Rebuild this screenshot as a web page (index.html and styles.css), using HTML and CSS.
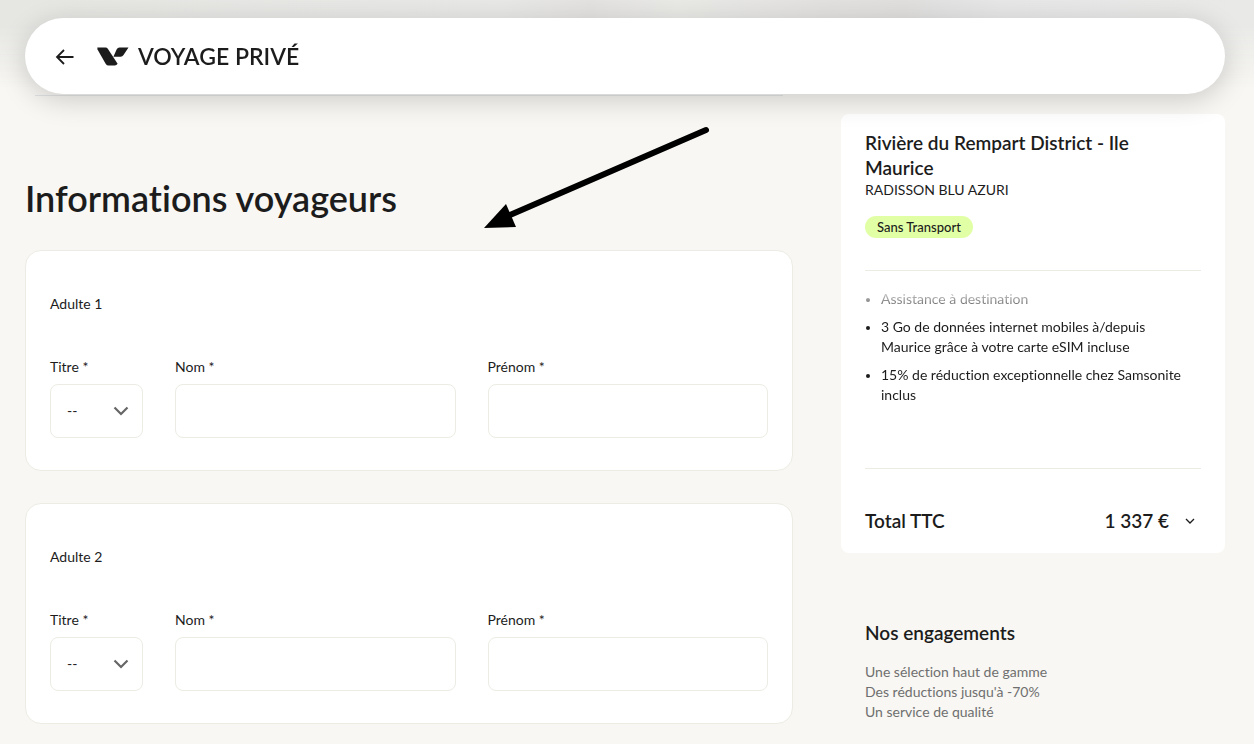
FILE: index.html
```html
<!DOCTYPE html>
<html lang="fr">
<head>
    <meta charset="UTF-8">
    <meta name="viewport" content="width=device-width, initial-scale=1.0">
    <title>Informations voyageurs - Voyage Privé</title>
    <link rel="stylesheet" href="styles.css">
</head>
<body>
    <div class="backdrop"></div>

    <header class="header">
        <a class="back" href="#" aria-label="Retour">
            <svg width="20" height="18" viewBox="0 0 20 18" fill="none" stroke="#1c1c1c" stroke-width="1.8">
                <path d="M18.500 10H2M9 3L2 10L9 17"/>
            </svg>
        </a>
        <a class="logo" href="#">
            <svg width="32" height="20" viewBox="0 0 32 20" fill="#1c1c1c">
                <path d="M0.300 1.500H8.500Q10 1.500 10.800 2.700L20.600 17.700Q19.500 19.500 17.800 19.500H11.500Q9.800 19.500 8.800 18L0.500 3.500Z"/>
                <path d="M22.500 1.500H31.500L26.500 9.100Q25.500 10.700 23.600 10.700H16.400L19.600 3.500Q20.600 1.500 22.500 1.500Z"/>
            </svg>
            <span>VOYAGE PRIVÉ</span>
        </a>
    </header>

    <main class="page">
        <div class="form-column">
            <div class="section-end"></div>
            <h1>Informations voyageurs</h1>

            <form>
                <!-- Traveller 1 -->
                <section class="card">
                    <h2>Adulte 1</h2>
                    <div class="fields">
                        <div class="field">
                            <label for="title-1">Titre *</label>
                            <div class="select-box">
                                <select id="title-1">
                                    <option>--</option>
                                </select>
                                <svg width="16" height="10" viewBox="0 0 16 10" fill="none" stroke="#666" stroke-width="2.200">
                                    <path d="M1.500 1.500L8 8L14.500 1.500"/>
                                </svg>
                            </div>
                        </div>
                        <div class="field">
                            <label for="lastname-1">Nom *</label>
                            <input type="text" id="lastname-1">
                        </div>
                        <div class="field">
                            <label for="firstname-1">Prénom *</label>
                            <input type="text" id="firstname-1">
                        </div>
                    </div>
                </section>

                <!-- Traveller 2 -->
                <section class="card">
                    <h2>Adulte 2</h2>
                    <div class="fields">
                        <div class="field">
                            <label for="title-2">Titre *</label>
                            <div class="select-box">
                                <select id="title-2">
                                    <option>--</option>
                                </select>
                                <svg width="16" height="10" viewBox="0 0 16 10" fill="none" stroke="#666" stroke-width="2.200">
                                    <path d="M1.500 1.500L8 8L14.500 1.500"/>
                                </svg>
                            </div>
                        </div>
                        <div class="field">
                            <label for="lastname-2">Nom *</label>
                            <input type="text" id="lastname-2">
                        </div>
                        <div class="field">
                            <label for="firstname-2">Prénom *</label>
                            <input type="text" id="firstname-2">
                        </div>
                    </div>
                </section>
            </form>
        </div>

        <aside class="sidebar">
            <section class="summary">
                <h3>Rivière du Rempart District - Ile Maurice</h3>
                <p class="hotel">RADISSON BLU AZURI</p>
                <span class="badge">Sans Transport</span>
                <div class="included">
                    <ul>
                        <li>Assistance à destination</li>
                        <li>3 Go de données internet mobiles à/depuis Maurice grâce à votre carte eSIM incluse</li>
                        <li>15% de réduction exceptionnelle chez Samsonite inclus</li>
                    </ul>
                </div>
                <div class="total">
                    <span>Total TTC</span>
                    <button type="button" class="price">
                        1&#8239;337&nbsp;€
                        <svg width="10" height="6" viewBox="0 0 10 6" fill="none" stroke="#1c1c1c" stroke-width="1.300">
                            <path d="M1 1L5 5L9 1"/>
                        </svg>
                    </button>
                </div>
            </section>

            <section class="commitments">
                <h4>Nos engagements</h4>
                <p>Une sélection haut de gamme</p>
                <p>Des réductions jusqu'à -70%</p>
                <p>Un service de qualité</p>
            </section>
        </aside>
    </main>

    <svg class="pointer" width="228" height="104" viewBox="0 0 228 104">
        <path d="M222 4L26 89" stroke="#000" stroke-width="6" stroke-linecap="round"/>
        <path d="M0 102L22 78L32 101Z" fill="#000"/>
    </svg>
</body>
</html>
```
FILE: styles.css
```css
* {
    box-sizing: border-box;
}
body {
    font-family: Lato, "Open Sans", sans-serif;
    font-size: 14px;
    font-variant-ligatures: none;
    line-height: 20px;
    color: #1c1c1c;
    background-color: #f8f7f3;
    margin: 0;
    padding: 18px 29px 0 25px;
    min-height: 100vh;
    overflow: hidden;
}
h1, h2, h3, h4, p, ul {
    margin: 0;
}

/* Blurred band behind the floating header */
.backdrop {
    position: fixed;
    top: 0;
    left: 0;
    right: 0;
    height: 88px;
    background: linear-gradient(to right, #e6e6e3, #e8e8e6 40%, #e3e2e1 47%, #e9e9e6 54%, #e2e1e0 66%, #e0dfde 72%, #e7e7e8 80%, #e9e9e7);
    -webkit-mask-image: linear-gradient(#000 30%, transparent);
    mask-image: linear-gradient(#000 30%, transparent);
}
.header {
    position: relative;
    z-index: 10;
    display: flex;
    align-items: center;
    gap: 22px;
    height: 76px;
    padding: 0 30px;
    background-color: #fff;
    border-radius: 38px;
    box-shadow: 0 6px 28px rgba(0, 0, 0, 0.18);
}
.back {
    display: flex;
}
.logo {
    display: flex;
    align-items: center;
    gap: 9px;
    font-size: 23px;
    font-weight: 600;
    color: #1c1c1c;
    text-decoration: none;
}
.page {
    display: grid;
    grid-template-columns: 2fr 1fr;
    gap: 48px;
}
.section-end {
    height: 2px;
    margin: 0 10px;
    border-bottom: 1px solid #e2e3e4;
}
h1 {
    margin: 77px 0 27px;
    font-size: 36px;
    font-weight: 600;
    line-height: 50px;
}
.card {
    margin-bottom: 32px;
    padding: 43px 24px 32px;
    background-color: #fff;
    border: 1px solid #ecece4;
    border-radius: 16px;
}
.card h2 {
    margin-bottom: 43px;
    font-size: 14px;
    font-weight: 400;
}
.fields {
    display: grid;
    grid-template-columns: 93px 1fr 1fr;
    gap: 32px;
}
.field label {
    display: block;
    margin-bottom: 7px;
}
.field input,
.field select {
    display: block;
    width: 100%;
    height: 54px;
    padding: 0 16px;
    font: inherit;
    color: #1c1c1c;
    background-color: #fff;
    border: 1px solid #ecece4;
    border-radius: 8px;
}
.field select {
    appearance: none;
}
.select-box {
    position: relative;
}
.select-box svg {
    position: absolute;
    top: 22px;
    right: 14px;
    pointer-events: none;
}

/* Booking summary */
.sidebar {
    padding-top: 20px;
}
.summary {
    padding: 16px 24px 19px;
    background-color: #fff;
    border-radius: 8px;
}
.summary h3 {
    font-size: 19px;
    font-weight: 600;
    line-height: 25px;
}
.badge {
    display: inline-block;
    margin-top: 16px;
    padding: 0 12px;
    font-size: 13px;
    font-weight: 500;
    line-height: 22px;
    background-color: #e1ffa5;
    border-radius: 11px;
}
.included {
    height: 199px;
    margin-top: 32px;
    border-top: 1px solid #ecece4;
    border-bottom: 1px solid #ecece4;
}
.included ul {
    padding: 18px 12px 0 16px;
    -webkit-mask-image: linear-gradient(transparent 16px, #000 44px);
    mask-image: linear-gradient(transparent 16px, #000 44px);
}
.included li {
    margin-bottom: 8px;
}
.included li::marker {
    font-size: 12px;
}
.total {
    display: flex;
    justify-content: space-between;
    align-items: center;
    margin-top: 39px;
    font-size: 19px;
    font-weight: 600;
    line-height: 26px;
}
.price {
    display: flex;
    align-items: center;
    gap: 16px;
    padding: 0 6px 0 0;
    font: inherit;
    color: inherit;
    background: none;
    border: none;
    cursor: pointer;
}
.commitments {
    margin-top: 67px;
    padding: 0 24px;
    color: #6f6f6f;
}
.commitments h4 {
    margin-bottom: 16px;
    font-size: 19px;
    font-weight: 600;
    line-height: 26px;
    color: #1c1c1c;
}

/* Arrow drawn over the page */
.pointer {
    position: absolute;
    top: 126px;
    left: 484px;
    pointer-events: none;
}
```
